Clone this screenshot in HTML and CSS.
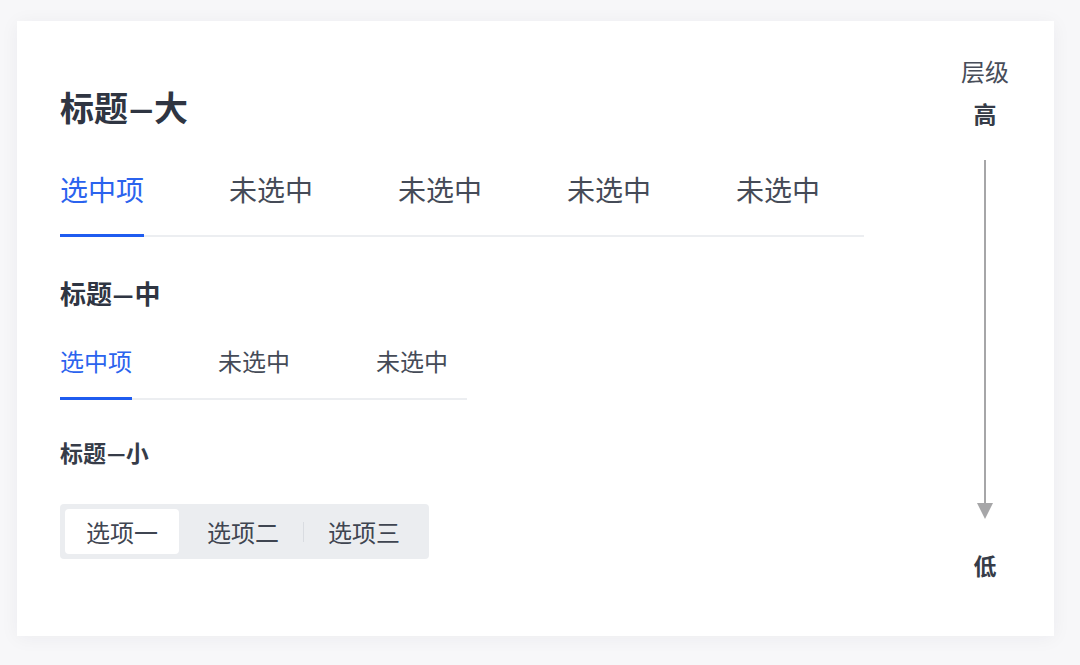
FILE: index.html
```html
<!DOCTYPE html>
<html lang="zh">
<head>
<meta charset="utf-8">
<title>层级</title>
<link rel="stylesheet" href="styles.css">
</head>
<body>
<div class="card">
  <div class="main">
    <h1 class="title-l">标题<span class="dash">–</span>大</h1>
    <div class="tabs tabs-l">
      <div class="tab active">选中项</div>
      <div class="tab">未选中</div>
      <div class="tab">未选中</div>
      <div class="tab">未选中</div>
      <div class="tab">未选中</div>
    </div>
    <h2 class="title-m">标题<span class="dash">–</span>中</h2>
    <div class="tabs tabs-m">
      <div class="tab active">选中项</div>
      <div class="tab">未选中</div>
      <div class="tab">未选中</div>
    </div>
    <h3 class="title-s">标题<span class="dash">–</span>小</h3>
    <div class="segmented">
      <div class="seg selected">选项一</div>
      <div class="seg second">选项二</div>
      <div class="seg-sep"></div>
      <div class="seg">选项三</div>
    </div>
  </div>
  <div class="level">
    <div class="level-label">层级</div>
    <div class="level-high">高</div>
    <svg class="level-arrow" width="20" height="359" viewBox="0 0 20 359">
      <line x1="10" y1="0" x2="10" y2="346" stroke="#a6a6a8" stroke-width="2"/>
      <polygon points="2,343 18,343 10,359" fill="#a6a6a8"/>
    </svg>
    <div class="level-low">低</div>
  </div>
</div>
</body>
</html>
```
FILE: styles.css
```css
* { box-sizing: border-box; }
html, body { margin: 0; padding: 0; }
body {
  background: #f7f7f9;
  font-family: "Noto Sans CJK SC", "Noto Sans", sans-serif;
  color: #353b47;
  width: 1080px;
  height: 665px;
  overflow: hidden;
}
.card {
  margin: 21px 26px 0 17px;
  height: 615px;
  background: #ffffff;
  box-shadow: 0 2px 18px rgba(30, 40, 60, 0.05);
  display: flex;
}
.main {
  flex: 1;
  padding: 66px 0 0 43px;
  display: flex;
  flex-direction: column;
  align-items: flex-start;
}
h1, h2, h3 { margin: 0; }
.dash {
  display: inline-block;
  transform: scaleX(1.6);
  margin: 0 0.16em;
}
.title-l {
  font-size: 34px;
  line-height: 40px;
  font-weight: 600;
  color: #2f3542;
}
.title-l .dash {
  transform: scaleX(1.4);
  margin: 0 0.11em;
}
.tabs {
  display: flex;
  border-bottom: 2px solid #eceef1;
}
.tab {
  color: #454b57;
  border-bottom: 3px solid transparent;
  margin-bottom: -2px;
  white-space: nowrap;
}
.tab.active {
  color: #2b63ee;
  border-bottom-color: #1f5cf0;
}
.tabs-l {
  margin-top: 42px;
  width: 804px;
  gap: 85px;
}
.tabs-l .tab {
  font-size: 28px;
  line-height: 40px;
  padding-bottom: 25px;
  width: 84px;
}
.title-m {
  margin-top: 39px;
  font-size: 26px;
  line-height: 34px;
  font-weight: 600;
  color: #2f3542;
}
.tabs-m {
  margin-top: 35px;
  width: 407px;
  gap: 86px;
}
.tabs-m .tab {
  font-size: 24px;
  line-height: 32px;
  padding-bottom: 20px;
  width: 72px;
}
.title-s {
  margin-top: 37px;
  font-size: 23px;
  line-height: 30px;
  font-weight: 600;
  color: #363c48;
}
.segmented {
  margin-top: 37px;
  display: flex;
  align-items: center;
  background: #ebedf0;
  border-radius: 4px;
  padding: 5px;
  width: 369px;
  height: 55px;
}
.seg {
  height: 45px;
  padding: 0 21px;
  font-size: 24px;
  line-height: 45px;
  color: #3f4551;
  border-radius: 4px;
  white-space: nowrap;
}
.seg.selected { background: #ffffff; }
.seg.second { margin-left: 7px; }
.seg-sep {
  width: 1px;
  height: 20px;
  background: #d9dce1;
  margin: 0 3px;
}
.level {
  width: 120px;
  margin-right: 9px;
  padding-top: 34px;
  display: flex;
  flex-direction: column;
  align-items: center;
}
.level-label {
  font-size: 24px;
  line-height: 32px;
  color: #474d59;
}
.level-high {
  margin-top: 10px;
  font-size: 23px;
  line-height: 32px;
  font-weight: 600;
  color: #363c48;
}
.level-arrow {
  display: block;
  margin-top: 31px;
}
.level-low {
  margin-top: 30px;
  font-size: 23px;
  line-height: 32px;
  font-weight: 600;
  color: #363c48;
}
```
